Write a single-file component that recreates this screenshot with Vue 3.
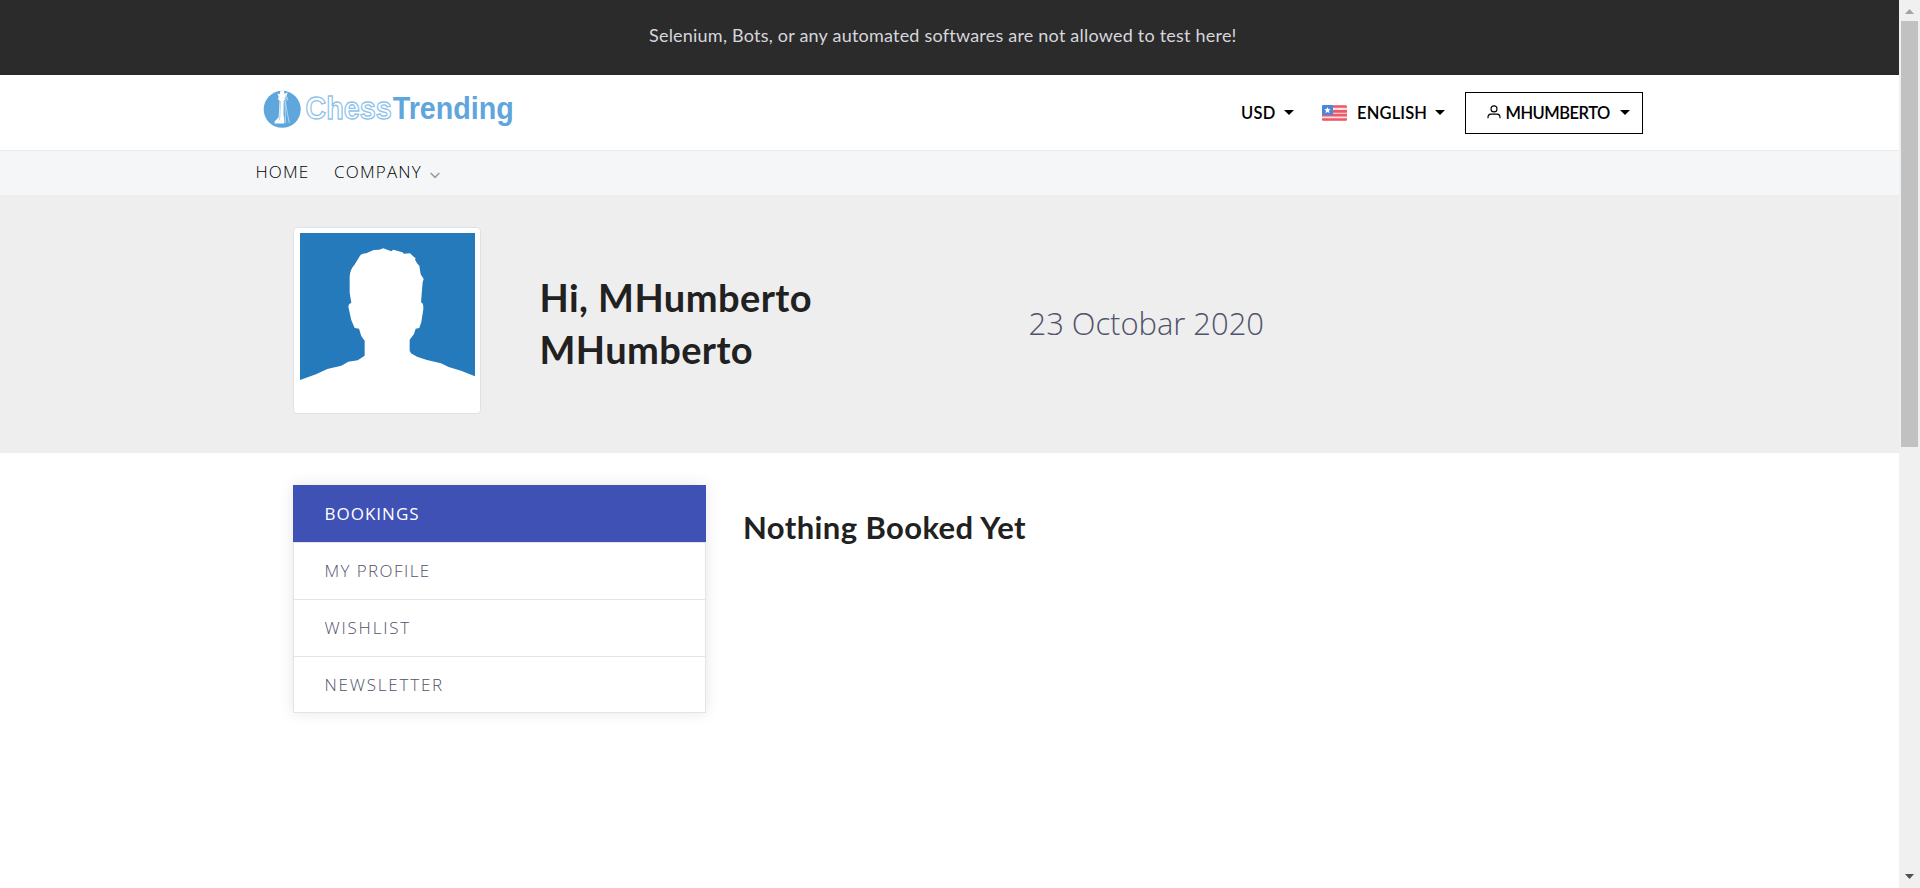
<script setup>
const links = [
  { label: 'My Profile', cls: 'profile' },
  { label: 'Wishlist', cls: 'wishlist' },
  { label: 'Newsletter', cls: 'newsletter' },
]
</script>

<template>
  <div class="window">
    <div class="page">
      <div class="notice"><span>Selenium, Bots, or any automated softwares are not allowed to test here!</span></div>

      <header class="header">
        <svg class="logo" width="260" height="50" viewBox="260 85 260 50">
          <circle cx="282.2" cy="109.3" r="18.5" fill="#5fa6dc" />
          <path d="M274.6 123.6v-2.2l2.4-2.5 1.7-2 .9-16.3-1.8-1.7 1-1.8-1.4-3.6 2.2.8 1-3.8h3.2l.8 3.6 3.2-1.8-1.6 4-1.2 1 .7 1.8-2 1.7-.2 14.2.8 3.6v5z" fill="#fff" />
          <path d="M280.4 101l-.5 16-1 3.4" fill="none" stroke="#9fc9e9" stroke-width=".8" />
          <path d="M285.6 95l2.3 4.5-2.6 1.3 2.2 13.5 1.8 8.6M284 98.5l3.6-.5M285 101l.6 22" fill="none" stroke="#c7e0f3" stroke-width=".8" />
          <text x="305.6" y="119" textLength="86" lengthAdjust="spacingAndGlyphs" class="chess">Chess</text>
          <text x="392.8" y="119" textLength="121" lengthAdjust="spacingAndGlyphs" class="trending">Trending</text>
        </svg>
        <div class="tools">
          <span class="usd">USD</span><i class="caret"></i>
          <svg class="flag" width="25" height="16" viewBox="0 0 25 16">
            <defs><clipPath id="flag-shape"><rect width="25" height="16" rx="1.5" /></clipPath></defs>
            <g clip-path="url(#flag-shape)">
              <rect width="25" height="16" fill="#fbe3e6" />
              <path d="M0 1.5h25M0 6.3h25M0 10.2h25M0 14.5h25" stroke="#f25767" stroke-width="2.7" />
              <rect width="11" height="10" fill="#4a86dc" />
              <path d="M5.5 2l.9 2.1 2.3.2-1.8 1.5.6 2.3-2-1.2-2 1.2.6-2.3-1.8-1.5 2.3-.2z" fill="#fff" />
            </g>
          </svg>
          <span class="english">ENGLISH</span><i class="caret"></i>
          <button class="account">
            <svg width="14" height="14" viewBox="0 0 14 14" fill="none" stroke="#000" stroke-width="1.1">
              <circle cx="7" cy="3.9" r="3" />
              <path d="M1 13.3V12a3 3 0 0 1 2.7-2.9h6.6A3 3 0 0 1 13 12v1.3" />
            </svg>
            <span>MHUMBERTO</span><i class="caret"></i>
          </button>
        </div>
      </header>

      <nav class="nav">
        <span class="home">HOME</span>
        <span class="company">COMPANY</span>
        <svg width="10" height="7" viewBox="0 0 10 7"><path d="M.7 1L5 5.3 9.3 1" fill="none" stroke="#999da3" stroke-width="1.6" /></svg>
      </nav>

      <section class="hero">
        <div class="avatar">
          <svg width="175" height="175" viewBox="0 0 525 525">
            <rect width="525" height="525" fill="#257abb" />
            <path fill="#fff" d="M0 525V441L48 424 82 408 124 398 145 386 173 382 194 368V323L184 310 177 287 164 285 154 262 146 226Q143 213 154 209L149 180V130Q151 108 163 96L176 75Q180 62 199 61L221 51 238 50 250 46 274 55 280 50 307 58 312 62 330 61 342 72 347 76 345 80 351 91 358 98 362 124 371 138 368 148 363 208Q371 210 370 229L364 267 358 285 347 287 342 303 329 320V353L333 361 351 371 381 381 423 391 446 402 483 413 525 430V525z" />
          </svg>
        </div>
        <h1>Hi, MHumberto <span>MHumberto</span></h1>
        <p class="date">23 Octobar 2020</p>
      </section>

      <main class="content">
        <aside class="menu">
          <div class="item active">Bookings</div>
          <div v-for="link in links" :key="link.label" class="item" :class="link.cls">{{ link.label }}</div>
        </aside>
        <h2>Nothing Booked Yet</h2>
      </main>
    </div>

    <div class="scrollbar">
      <svg width="21" height="21" viewBox="0 0 21 21"><path d="M6 14l4.5-5 4.5 5z" fill="#a3a3a3" /></svg>
      <div class="thumb"></div>
      <svg class="down" width="21" height="21" viewBox="0 0 21 21"><path d="M6 7l4.5 5L15 7z" fill="#505050" /></svg>
    </div>
  </div>
</template>

<style>
body { margin: 0; overflow: hidden; }
</style>

<style scoped>
.window { display: flex; height: 888px; background: #fff; font-family: Lato, "Open Sans", sans-serif; }
.window * { box-sizing: border-box; }
.page { width: 1899px; }
.notice { height: 75px; padding: 0 0 4px 649px; background: #2b2b2b; color: #d6d6dc; font-size: 18px; line-height: 71px; letter-spacing: .215px; white-space: nowrap; }
.header { display: flex; align-items: center; height: 76px; padding-left: 260px; border-bottom: 1px solid #e9ebed; box-shadow: 0 0 4px rgba(0,0,0,.06); }
.logo { margin-top: -6px; overflow: visible; font-family: "Liberation Sans", Arial, sans-serif; font-weight: 700; }
.chess { fill: #fff; stroke: #8fc3ea; stroke-width: 1.3px; font-size: 31px; }
.trending { fill: #5fa6dc; font-size: 31px; }
.tools { display: flex; align-items: center; margin-left: 721px; color: #000; font-size: 16.5px; font-weight: 600; line-height: 20px; }
.usd { width: 43px; letter-spacing: .3px; }
.caret { width: 0; height: 0; border: solid transparent; border-width: 5.5px 5px 0; border-top-color: #000; }
.flag { margin: 0 10px 0 28px; }
.english { width: 78px; letter-spacing: .15px; }
.account { display: flex; align-items: center; width: 178px; height: 42px; margin-left: 20px; padding: 0 0 0 20.5px; background: #fff; border: 1px solid #000; color: #000; font: 600 16.5px/20px Lato, sans-serif; }
.account svg { margin: -2px 5px 0 0; }
.account span { width: 114px; letter-spacing: -.5px; text-align: left; }
.nav { display: flex; align-items: center; height: 44px; padding: 0 0 2px 255.5px; background: #f4f6f8; color: #000; font: 350 17px/20px "Open Sans", sans-serif; }
.home { width: 78.5px; letter-spacing: 1.1px; }
.company { width: 96px; letter-spacing: 1.2px; }
.nav svg { margin-top: 6px; }
.hero { display: flex; height: 258px; padding-left: 293px; background: #eee; }
.avatar { width: 188px; height: 187px; margin-top: 32px; padding: 6px; background: #fff; border: 1px solid #dee2e6; border-radius: 4px; }
.avatar svg { display: block; margin-top: -1px; }
h1 { width: 488px; margin: 76px 0 0 58.5px; color: #212121; font-size: 38px; font-weight: 700; line-height: 52px; letter-spacing: .45px; }
h1 span { display: block; letter-spacing: .4px; }
.date { margin: 108px 0 0 1px; color: #50536a; font: 350 31px/40px "Open Sans", sans-serif; letter-spacing: -.05px; }
.content { display: flex; padding: 32px 0 0 293px; }
.menu { width: 413px; height: 228px; border: 1px solid #e4e4e6; box-shadow: 0 0 14px rgba(0,0,0,.1); color: #50536a; font: 350 17px/57px "Open Sans", sans-serif; }
.item { height: 57px; padding-left: 30.5px; border-bottom: 1px solid #e4e4e6; line-height: 55px; text-transform: uppercase; }
.item:last-child { border-bottom: 0; }
.active { width: 413px; margin: -1px 0 0 -1px; padding-left: 31.5px; background: #3f51b5; border-color: #3f51b5; color: #fff; font-weight: 500; line-height: 57px; letter-spacing: 1px; }
.item.profile { height: 58px; border-top: 1px solid #e4e4e6; letter-spacing: 1.4px; }
.wishlist { letter-spacing: 1.8px; }
.newsletter { letter-spacing: 1.8px; }
h2 { margin: 22px 0 0 37px; color: #212121; font-size: 31px; font-weight: 700; line-height: 40px; letter-spacing: .4px; }
.scrollbar { display: flex; flex-direction: column; width: 21px; height: 888px; background: #f0f0f0; }
.thumb { width: 17px; height: 426px; margin-left: 2px; background: #c1c1c1; }
.down { margin-top: auto; }
</style>
